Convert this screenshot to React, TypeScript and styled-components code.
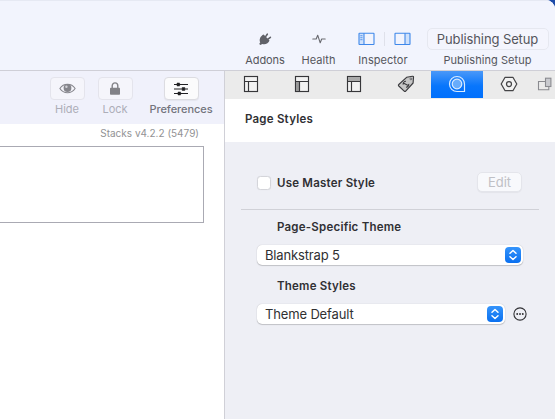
import React from "react";
import styled, { createGlobalStyle, css } from "styled-components";

const Global = createGlobalStyle`
  * { box-sizing: border-box; }
  body { margin: 0; background: #1c4aa8; overflow: hidden; }
  svg { display: block; flex: none; }
`;

const Window = styled.div`
  width: 555px;
  height: 419px;
  display: flex;
  flex-direction: column;
  overflow: hidden;
  background: #fff;
  border-top-right-radius: 9px;
  font-family: Inter, "Liberation Sans", sans-serif;
`;

const Label = styled.span<{ $size?: number; $weight?: number; $color?: string; $spacing?: number }>`
  display: block;
  font-size: ${(p) => p.$size ?? 11}px;
  font-weight: ${(p) => p.$weight ?? 400};
  color: ${(p) => p.$color ?? "#55565c"};
  letter-spacing: ${(p) => p.$spacing ?? 0}px;
  line-height: 16px;
  white-space: nowrap;
`;

const Heading = styled(Label)`
  font-size: 11.5px;
  font-weight: 600;
  color: #303034;
  letter-spacing: 0.22px;
`;

const Value = styled(Label)`
  font-size: 13px;
  color: #303032;
  letter-spacing: -0.15px;
`;

const Toolbar = styled.header`
  height: 71px;
  flex: none;
  display: flex;
  justify-content: flex-end;
  padding: 27px 4px 0 0;
  background: #f2f4fd;
  border-top: 1px solid #e6e9f3;
  border-bottom: 1px solid #cfcfd7;
`;

const ToolItem = styled.div<{ $width: number }>`
  width: ${(p) => p.$width}px;
  display: flex;
  flex-direction: column;
  align-items: center;
`;

const InspectorItem = styled(ToolItem)`
  ${Label} {
    margin-right: 3px;
  }
`;

const ToolIcons = styled.div`
  height: 22px;
  margin-bottom: 2px;
  display: flex;
  align-items: center;
`;

const Separator = styled.div`
  width: 1px;
  height: 14px;
  margin: 0 9px 0 9px;
  background: #dfe1ea;
`;

const PublishButton = styled.button`
  width: 122px;
  height: 22px;
  padding: 0;
  display: flex;
  align-items: center;
  justify-content: center;
  border: 1px solid #e6e8f0;
  border-radius: 5px;
  background: #f4f5fd;
  font-family: inherit;
`;

const Body = styled.main`
  flex: 1;
  display: flex;
  min-height: 0;
`;

const Editor = styled.section`
  width: 225px;
  flex: none;
  border-right: 1px solid #d0d0d7;
  background: #fff;
`;

const EditorBar = styled.div`
  height: 53px;
  display: flex;
  justify-content: flex-end;
  padding: 6px 11px 0 0;
  background: #f0f1fb;
`;

const EditorItem = styled.div<{ $width: number; $after?: number }>`
  width: ${(p) => p.$width}px;
  margin-right: ${(p) => p.$after ?? 0}px;
  display: flex;
  flex-direction: column;
  align-items: center;
  gap: 1px;
`;

const IconButton = styled.button<{ $active?: boolean }>`
  width: 35px;
  height: 23px;
  padding: 0;
  display: flex;
  align-items: center;
  justify-content: center;
  border: 1px solid #e4e4ec;
  border-radius: 4px;
  background: #f5f5fb;
  ${(p) =>
    p.$active &&
    css`
      border-color: #dcdce1;
      background: #fbfbfc;
      box-shadow: 0 1px 1px #0000000d;
    `}
`;

const Version = styled.div`
  height: 22px;
  padding: 1px 25px 0 0;
  display: flex;
  justify-content: flex-end;
`;

const Canvas = styled.div`
  width: 204px;
  height: 77px;
  border: 1px solid #aaaab3;
  border-left: 0;
`;

const Inspector = styled.aside`
  flex: 1;
  min-width: 0;
  background: #eeeff5;
`;

const Tabs = styled.nav`
  height: 28px;
  display: flex;
  overflow: hidden;
  background: #ebebeb;
`;

const Tab = styled.div<{ $active?: boolean }>`
  width: 51.6px;
  height: 27px;
  flex: none;
  padding-bottom: 1px;
  display: flex;
  align-items: center;
  justify-content: center;
  background: ${(p) => (p.$active ? "linear-gradient(#4a98f8, #0876fc 55%, #0070fc)" : "none")};
`;

const LastTab = styled(Tab)`
  justify-content: flex-start;
  padding-left: 2px;
`;

const PanelTitle = styled.div`
  height: 43px;
  padding: 12px 0 0 20px;
  background: #fff;
`;

const Form = styled.div`
  padding: 29px 16px 0;
`;

const MasterRow = styled.div`
  height: 39px;
  padding: 0 17px 0 16px;
  display: flex;
  align-items: flex-start;
  justify-content: space-between;
  border-bottom: 1px solid #d0d1d7;
`;

const CheckLabel = styled.label`
  height: 24px;
  display: flex;
  align-items: center;
  gap: 6px;
`;

const Checkbox = styled.span`
  width: 14px;
  height: 14px;
  border: 1px solid #d4d5da;
  border-radius: 3.5px;
  background: #fff;
  box-shadow: 0 0 1px #00000014;
`;

const EditButton = styled.button`
  width: 45px;
  height: 20px;
  margin-top: 1px;
  padding: 0;
  border: 1px solid #e4e5eb;
  border-radius: 5px;
  background: #f8f9fc;
  box-shadow: 0 1px 1px #0000000c;
  font-family: inherit;
  display: flex;
  align-items: center;
  justify-content: center;
`;

const FieldTitle = styled.div<{ $top: number }>`
  height: ${(p) => p.$top + 26}px;
  padding: ${(p) => p.$top}px 0 0 36px;
`;

const SelectRow = styled.div`
  padding-left: 16px;
  display: flex;
  align-items: center;
  gap: 8px;
`;

const Select = styled.div<{ $width: number }>`
  width: ${(p) => p.$width}px;
  height: 20px;
  padding: 0 2px 0 8px;
  display: flex;
  align-items: center;
  justify-content: space-between;
  border-radius: 5px;
  background: #fff;
  box-shadow: 0 0 1px #00000040, 0 1px 1px #0000002c;
`;

const Stepper = styled.span`
  width: 16px;
  height: 16px;
  border-radius: 4px;
  background: linear-gradient(#3594fb, #0a70f0);
`;

const SidebarIcon = ({ right }: { right?: boolean }) => (
  <svg width="17" height="14" viewBox="0 0 17 14" fill="none" stroke="#3f88ea" strokeWidth="1.1">
    <rect x={right ? 11 : 1} y="1.5" width="5" height="11" fill="#cfe1fb" stroke="none" />
    <rect x="1" y="1.3" width="15" height="11.2" rx=".5" />
    <path d={right ? "M11 1.3v11.2" : "M6 1.3v11.2"} />
    {!right && <path d="M2.3 3.7H4.5M2.3 5.7H4.5M2.3 7.7H4.5" strokeWidth=".8" />}
  </svg>
);

const PlugIcon = () => (
  <svg width="14" height="14" viewBox="0 0 14 14" fill="#606168" stroke="#606168" strokeLinecap="round">
    <path d="M5.6 2.4 11.5 8.6C10.5 11.2 7.3 13.2 4.3 12L2.4 13 1.2 11.9 2.2 10.3C.8 7.4 2.6 3.7 5.6 2.4Z" stroke="none" />
    <path d="m7.6 4.6 1.7-2.4M10 7.1l2.4-1.8" strokeWidth="1.6" />
  </svg>
);

const HealthIcon = () => (
  <svg width="14" height="12" viewBox="0 0 14 12" fill="none" stroke="#68696f" strokeWidth="1.1" strokeLinecap="round" strokeLinejoin="round">
    <path d="M.8 6h3.4l1.5-3.8L8.2 9.8 9.7 6h3.5" />
  </svg>
);

const EyeIcon = () => (
  <svg width="17" height="13" viewBox="0 0 17 13" fill="none" stroke="#86868c">
    <path d="M.9 6.5C4.6.9 12.4.9 16.1 6.5 12.4 12.1 4.6 12.1.9 6.5Z" strokeWidth="1.1" />
    <circle cx="8.5" cy="6" r="3.9" fill="#86868c" stroke="none" />
    <circle cx="7.4" cy="4.7" r="1.2" fill="#d2d2d7" stroke="none" />
  </svg>
);

const LockIcon = () => (
  <svg width="12" height="14" viewBox="0 0 12 14" fill="none">
    <rect x="1" y="5.8" width="10" height="7" rx=".8" fill="#828287" />
    <path d="M3.2 6.2V3.7a2.8 2.8 0 0 1 5.6 0v2.5" stroke="#828287" strokeWidth="1.4" />
  </svg>
);

const SlidersIcon = () => (
  <svg width="16" height="14" viewBox="0 0 16 14" stroke="#202023" fill="#202023">
    <path d="M1 2.5h14M1 7h14M1 11.5h14" strokeWidth="1.1" />
    <path d="M4 1h2.6v3H4zM9.2 5.5h2.6v3H9.2zM5 10h2.6v3H5z" strokeWidth=".5" />
  </svg>
);

const LayoutIcon = ({ fill }: { fill?: "side" | "top" }) => (
  <svg width="16" height="18" viewBox="0 0 16 18" fill="none" stroke="#37373a" strokeWidth="1.15">
    <rect x="1.5" y="1.5" width="13" height="15" fill="#f2f2f2" />
    {fill === "top" && <rect x="2" y="2" width="12" height="4.5" fill="#aaa" stroke="none" />}
    {fill === "side" && <rect x="2" y="7" width="3.5" height="9" fill="#999" stroke="none" />}
    <path d="M1.5 6.5h13M5.5 6.5v10" />
  </svg>
);

const TagIcon = () => (
  <svg width="18" height="18" viewBox="0 0 18 18" fill="none" stroke="#3b3b3e" strokeWidth="1.15" strokeLinejoin="round">
    <path d="M9.6 2.3 15.4 1.3Q16.6 1.2 16.5 2.4L16.1 8 8.7 16.1Q8 16.8 7.2 16.1L1.8 11Q1 10.2 1.8 9.5Z" fill="#c6c6c6" />
    <circle cx="13.9" cy="3.9" r=".9" fill="#eee" strokeWidth=".7" />
    <path d="M9 6.3A2.7 2.7 0 0 0 6.2 9.6M9 12.2A2.7 2.7 0 0 0 11.7 8.8M6.8 8.2l4.4 2.2" strokeWidth="1.1" />
  </svg>
);

const StylesIcon = () => (
  <svg width="18" height="18" viewBox="0 0 18 18" fill="none" stroke="#d9ebff" strokeWidth="1.2">
    <path d="M16.5 16.5H9A7.5 7.5 0 1 1 16.5 9Z" />
    <circle cx="9" cy="9" r="4.8" fill="#68acfb" />
  </svg>
);

const HexIcon = () => (
  <svg width="18" height="16" viewBox="0 0 18 16" fill="none" stroke="#454547" strokeWidth="1.25">
    <path d="M5.1 1.3h7.8L16.8 8l-3.9 6.7H5.1L1.2 8Z" fill="#f2f2f2" strokeLinejoin="round" />
    <circle cx="9" cy="8" r="2.5" />
  </svg>
);

const StackIcon = () => (
  <svg width="16" height="16" viewBox="0 0 16 16" fill="none" stroke="#8a8b90" strokeWidth="1.1">
    <path d="M8 5.5H1.5v8.3H11.8V11" />
    <rect x="8.5" y="2.2" width="5.4" height="8.3" fill="#c9cacf" />
  </svg>
);

const Chevrons = () => (
  <Stepper>
    <svg width="16" height="16" viewBox="0 0 16 16" fill="none" stroke="#fff" strokeWidth="1.5" strokeLinecap="round" strokeLinejoin="round">
      <path d="M5 6.2 8 3.5l3 2.7M5 9.8l3 2.7 3-2.7" />
    </svg>
  </Stepper>
);

const MoreIcon = () => (
  <svg width="14" height="14" viewBox="0 0 14 14" fill="none" stroke="#303034" strokeWidth="1.1">
    <circle cx="7" cy="7" r="6.1" />
    <g fill="#303034" stroke="none">
      <circle cx="4.2" cy="7" r=".95" />
      <circle cx="7" cy="7" r=".95" />
      <circle cx="9.8" cy="7" r=".95" />
    </g>
  </svg>
);

export default function App() {
  return (
    <>
      <Global />
      <Window>
        <Toolbar>
          <ToolItem $width={54}>
            <ToolIcons><PlugIcon /></ToolIcons>
            <Label $spacing={-0.08}>Addons</Label>
          </ToolItem>
          <ToolItem $width={53}>
            <ToolIcons><HealthIcon /></ToolIcons>
            <Label>Health</Label>
          </ToolItem>
          <InspectorItem $width={79}>
            <ToolIcons>
              <SidebarIcon />
              <Separator />
              <SidebarIcon right />
            </ToolIcons>
            <Label $spacing={0.04}>Inspector</Label>
          </InspectorItem>
          <ToolItem $width={127}>
            <ToolIcons>
              <PublishButton>
                <Label $size={13} $spacing={-0.1}>Publishing Setup</Label>
              </PublishButton>
            </ToolIcons>
            <Label $spacing={0.05}>Publishing Setup</Label>
          </ToolItem>
        </Toolbar>
        <Body>
          <Editor>
            <EditorBar>
              <EditorItem $width={48}>
                <IconButton><EyeIcon /></IconButton>
                <Label $color="#adaeb8">Hide</Label>
              </EditorItem>
              <EditorItem $width={48} $after={10}>
                <IconButton><LockIcon /></IconButton>
                <Label $color="#adaeb8">Lock</Label>
              </EditorItem>
              <EditorItem $width={64}>
                <IconButton $active><SlidersIcon /></IconButton>
                <Label $weight={500} $color="#73747d" $spacing={-0.07}>Preferences</Label>
              </EditorItem>
            </EditorBar>
            <Version><Label $size={10} $color="#929294">Stacks v4.2.2 (5479)</Label></Version>
            <Canvas />
          </Editor>
          <Inspector>
            <Tabs>
              <Tab><LayoutIcon /></Tab>
              <Tab><LayoutIcon fill="side" /></Tab>
              <Tab><LayoutIcon fill="top" /></Tab>
              <Tab><TagIcon /></Tab>
              <Tab $active><StylesIcon /></Tab>
              <Tab><HexIcon /></Tab>
              <LastTab><StackIcon /></LastTab>
            </Tabs>
            <PanelTitle><Heading>Page Styles</Heading></PanelTitle>
            <Form>
              <MasterRow>
                <CheckLabel>
                  <Checkbox />
                  <Heading>Use Master Style</Heading>
                </CheckLabel>
                <EditButton><Label $size={13} $color="#bfc0c5">Edit</Label></EditButton>
              </MasterRow>
              <FieldTitle $top={9}><Heading>Page-Specific Theme</Heading></FieldTitle>
              <SelectRow>
                <Select $width={266}>
                  <Value>Blankstrap 5</Value>
                  <Chevrons />
                </Select>
              </SelectRow>
              <FieldTitle $top={13}><Heading>Theme Styles</Heading></FieldTitle>
              <SelectRow>
                <Select $width={248}>
                  <Value>Theme Default</Value>
                  <Chevrons />
                </Select>
                <MoreIcon />
              </SelectRow>
            </Form>
          </Inspector>
        </Body>
      </Window>
    </>
  );
}
